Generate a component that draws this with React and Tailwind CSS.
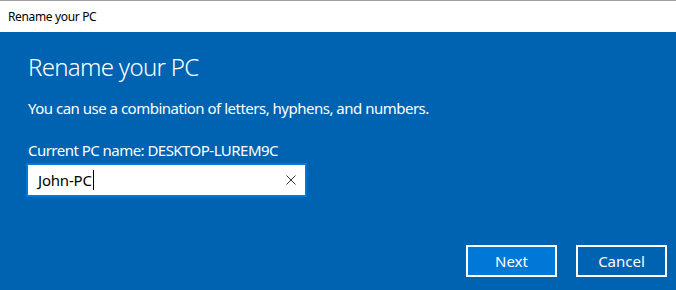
export default function App() {
  const font = { fontFamily: '"Noto Sans", "Open Sans", sans-serif' };
  return (
    <div className="w-[676px] h-[290px] flex flex-col bg-[#0063b1] overflow-hidden" style={font}>
      <div className="h-[32px] shrink-0 bg-white border-t border-[#a0a0a0] flex items-center pl-[8px] text-[12px] leading-[16px] tracking-[-0.35px] text-black">
        Rename your PC
      </div>
      <div className="flex-1 flex flex-col pl-[28px] text-white">
        <div className="mt-[19px] text-[24px] leading-[32px] font-light tracking-[-0.7px]">Rename your PC</div>
        <div className="mt-[15px] text-[15px] leading-[20px] tracking-[-0.5px]">
          You can use a combination of letters, hyphens, and numbers.
        </div>
        <div className="mt-[22px] text-[15px] leading-[20px] tracking-[-0.53px]">Current PC name: DESKTOP-LUREM9C</div>
        <div className="mt-[3px] ml-[-2px] w-[281px] h-[34px] border-2 border-[#0078d7] bg-white flex items-center pl-[10px] pr-[8px]">
          <span className="text-[15px] leading-[20px] text-black tracking-[-0.2px]">John-PC</span>
          <span className="w-px h-[20px] bg-black ml-px"></span>
          <span className="flex-1"></span>
          <svg width="10" height="10" viewBox="0 0 10 10" className="mr-[1px]">
            <path d="M0.5 0.5 L9.5 9.5 M9.5 0.5 L0.5 9.5" stroke="#333" strokeWidth="1" fill="none" />
          </svg>
        </div>
        <div className="mt-[48px] flex justify-end gap-[19px] pr-[9px]">
          <button className="w-[91px] h-[32px] border-2 border-white bg-[#0078d7] text-[15px] leading-[20px] text-white">
            Next
          </button>
          <button className="w-[91px] h-[32px] border-2 border-white bg-transparent text-[15px] leading-[20px] text-white">
            Cancel
          </button>
        </div>
      </div>
    </div>
  );
}
